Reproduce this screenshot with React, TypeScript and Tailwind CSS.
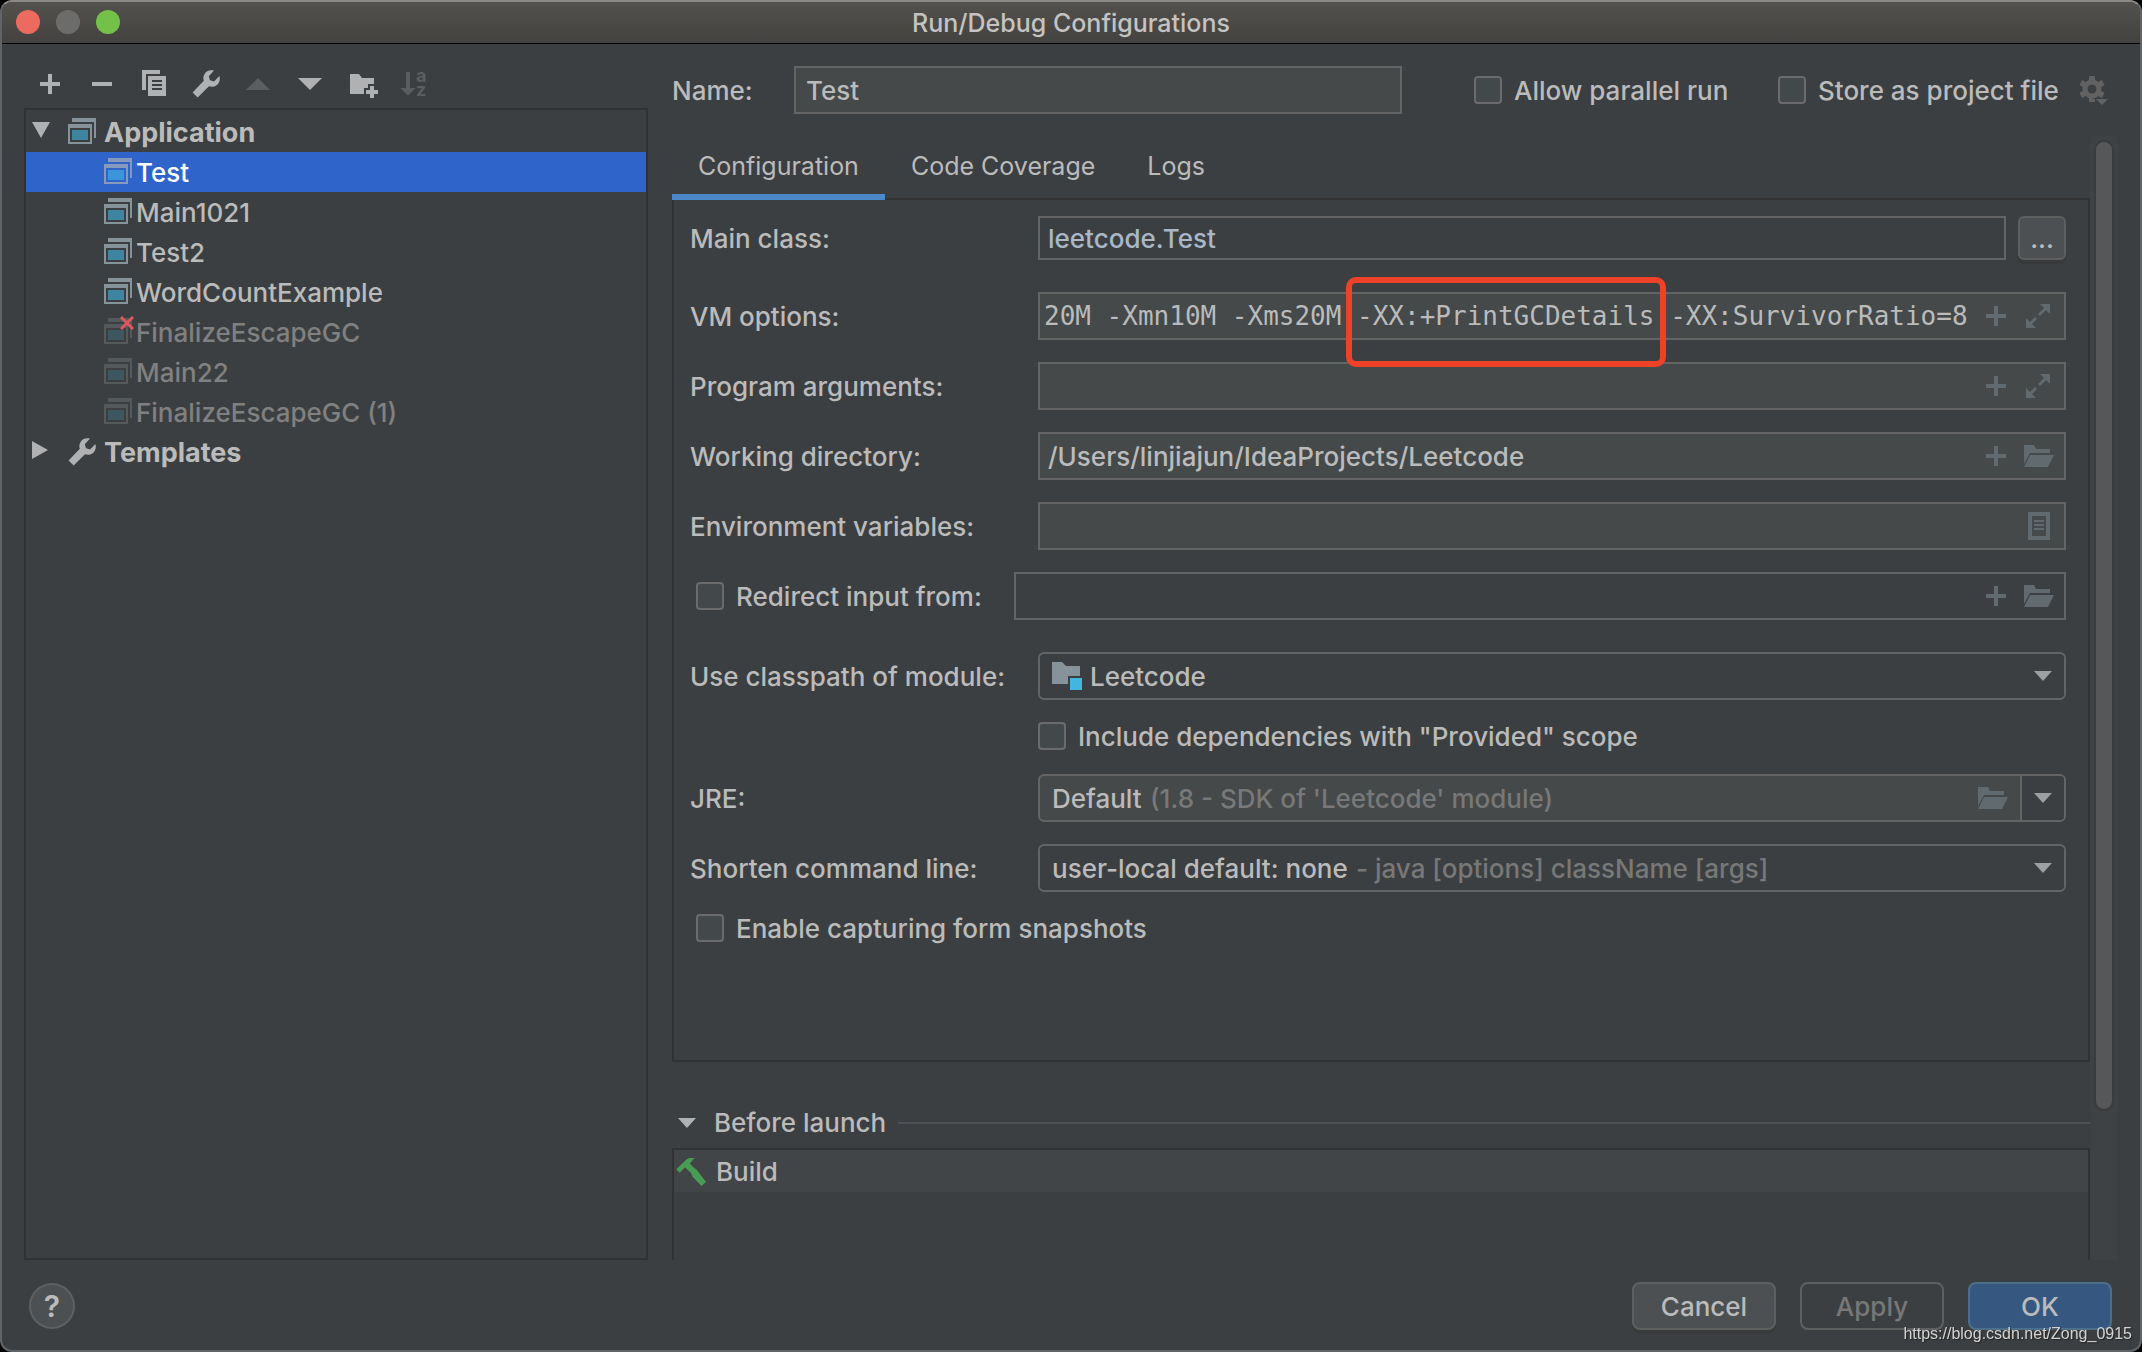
import React, { useId, useState } from "react";

type IconProps = { className?: string };

const PlusIcon = ({ className = "" }: IconProps) => (
  <svg width="32" height="32" viewBox="0 0 32 32" fill="currentColor" className={className} aria-hidden="true">
    <path d="M14 6h4v8h8v4h-8v8h-4v-8H6v-4h8z" />
  </svg>
);

const MinusIcon = () => (
  <svg width="32" height="32" viewBox="0 0 32 32" fill="currentColor" aria-hidden="true">
    <path d="M6 14h20v4H6z" />
  </svg>
);

const CopyIcon = () => (
  <svg width="32" height="32" viewBox="0 0 16 16" fill="currentColor" aria-hidden="true">
    <path d="M2 1h9v2H4v8H2z" />
    <path fillRule="evenodd" d="M5 4h9v10H5zM7 6v1h5V6zM7 8v1h5V8zM7 10v1h5v-1z" />
  </svg>
);

const WrenchIcon = () => (
  <svg width="32" height="32" viewBox="0 0 16 16" fill="currentColor" aria-hidden="true">
    <path d="M14.7 4 12 6.7l-2-.6-.6-2L12 1.3c-1.5-.5-3.1-.2-4.2.9C6.7 3.4 6.4 5 6.9 6.4L1.3 12.2l2.5 2.5 5.7-5.6c1.5.5 3.1.2 4.3-.9C14.9 7 15.2 5.4 14.7 4z" />
  </svg>
);

const UpIcon = () => (
  <svg width="32" height="32" viewBox="0 0 32 32" fill="currentColor" aria-hidden="true">
    <path d="M4 22 16 10l12 12z" />
  </svg>
);

const DownIcon = () => (
  <svg width="32" height="32" viewBox="0 0 32 32" fill="currentColor" aria-hidden="true">
    <path d="M4 10h24L16 22z" />
  </svg>
);

const NewFolderIcon = () => (
  <svg width="32" height="32" viewBox="0 0 16 16" fill="currentColor" aria-hidden="true">
    <path d="M2 3h4.5L8 5h6v3h-3v2H9v3H2z" />
    <path d="M12 9h2v2h2v2h-2v2h-2v-2h-2v-2h2z" />
  </svg>
);

const SortIcon = () => (
  <svg width="32" height="32" viewBox="0 0 16 16" fill="currentColor" className="overflow-visible" aria-hidden="true">
    <path d="M4 2h2v8h2.8L5 13.8 1.2 10H4z" />
    <text x="9" y="7" fontSize="9" fontWeight="700" fontFamily="Inter, sans-serif">a</text>
    <text x="9" y="13.8" fontSize="9" fontWeight="700" fontFamily="Inter, sans-serif">z</text>
  </svg>
);

const ComboArrow = () => (
  <svg width="18" height="10" viewBox="0 0 18 10" aria-hidden="true">
    <path d="M0 0h18L9 10z" fill="#9da0a3" />
  </svg>
);

const ExpandIcon = () => (
  <svg width="32" height="32" viewBox="0 0 32 32" fill="currentColor" aria-hidden="true">
    <path d="M28 4v10l-4-4-6 6-2-2 6-6-4-4z" />
    <path d="M4 28V18l4 4 5-5 2 2-5 5 4 4z" />
  </svg>
);

const OpenFolderIcon = () => (
  <svg width="32" height="32" viewBox="0 0 32 32" fill="currentColor" aria-hidden="true">
    <path d="M2 5h10l2 4h14v4H8L2 24z" />
    <path d="M8 15h24l-6 12H2z" />
  </svg>
);

const ListIcon = () => (
  <svg width="32" height="32" viewBox="0 0 32 32" fill="currentColor" aria-hidden="true">
    <path fillRule="evenodd" d="M6 2h22v28H6zM10 6v20h14V6z" />
    <path d="M12 10h10v2H12zM12 14h10v2H12zM12 18h10v2H12z" />
  </svg>
);

const ModuleIcon = () => (
  <svg width="30" height="28" viewBox="0 0 30 28" aria-hidden="true" className="shrink-0">
    <path d="M0 0h10l4 4h14v10H16v8H0z" fill="#87939a" />
    <path d="M18 16h12v12H18z" fill="#40b6e0" />
  </svg>
);

const GearIcon = () => (
  <svg width="28" height="32" viewBox="0 0 28 32" aria-hidden="true" fill="#626262">
    <mask id="gear-hole">
      <path d="M0 0h28v32H0z" fill="#fff" />
      <circle cx="12" cy="15" r="4.5" fill="#000" />
      <path d="M13 24h15v8h-6z" fill="#000" />
    </mask>
    <g mask="url(#gear-hole)">
      <circle cx="12" cy="15" r="9.5" />
      <rect x="9" y="2" width="6" height="26" rx="1" />
      <rect x="9" y="2" width="6" height="26" rx="1" transform="rotate(60 12 15)" />
      <rect x="9" y="2" width="6" height="26" rx="1" transform="rotate(120 12 15)" />
    </g>
    <path d="M16 25h12l-6 6z" />
  </svg>
);

const HammerIcon = () => (
  <svg width="30" height="30" viewBox="0 0 30 30" fill="#499c54" aria-hidden="true" className="shrink-0">
    <path d="M.3 12.3 10.7 2.3 13 1h5.5L13.8 6.6 17 10l3.5 2.5L30 25l-4.5 4L16.5 19.5 15 16 9 10.3 3.7 15.8z" />
  </svg>
);

const AppIcon = ({ tone, broken }: { tone: "normal" | "selected" | "dim"; broken?: boolean }) => {
  const frame = tone === "dim" ? "#54595c" : tone === "selected" ? "#8699ba" : "#87939a";
  const inner = tone === "dim" ? "#3d565f" : tone === "selected" ? "#3a95dc" : "#3e86a0";
  return (
    <svg width="32" height="32" viewBox="0 0 32 32" aria-hidden="true" className="shrink-0">
      <path d="M6 2h24v20h-2V6H6z" fill={frame} />
      <path fillRule="evenodd" d="M2 8h24v20H2zM4 12v14h20V12z" fill={frame} />
      <path d="M6 14h16v10H6z" fill={inner} />
      {broken && <path d="M19 1l12 12M31 1 19 13" stroke="#db5860" strokeWidth="3" />}
    </svg>
  );
};

const toolbar = [
  { label: "Add", icon: <PlusIcon /> },
  { label: "Remove", icon: <MinusIcon /> },
  { label: "Copy", icon: <CopyIcon /> },
  { label: "Edit templates", icon: <WrenchIcon /> },
  { label: "Move up", icon: <UpIcon />, disabled: true },
  { label: "Move down", icon: <DownIcon /> },
  { label: "Create folder", icon: <NewFolderIcon /> },
  { label: "Sort", icon: <SortIcon />, disabled: true },
];

const configs = [
  { name: "Test" },
  { name: "Main1021" },
  { name: "Test2" },
  { name: "WordCountExample" },
  { name: "FinalizeEscapeGC", dim: true, broken: true },
  { name: "Main22", dim: true },
  { name: "FinalizeEscapeGC (1)", dim: true },
];

function Check({ label, className = "" }: { label: string; className?: string }) {
  return (
    <label className={`flex items-center gap-3 whitespace-nowrap ${className}`}>
      <input
        type="checkbox"
        className="size-7 shrink-0 appearance-none rounded border-2 border-[#6b6b6b] bg-[#43494a] checked:bg-[#4a88c7]"
      />
      <span className="pt-0.5">{label}</span>
    </label>
  );
}

function IconButton({ label, children }: { label: string; children: React.ReactNode }) {
  return (
    <button type="button" aria-label={label} className="size-8 shrink-0 text-[#616a6e]">
      {children}
    </button>
  );
}

type FieldProps = {
  label: string;
  value?: string;
  mono?: boolean;
  icons?: React.ReactNode;
  children?: React.ReactNode;
};

function Field({ label, value = "", mono, icons, children }: FieldProps) {
  const id = useId();
  return (
    <div className="flex items-center">
      <label htmlFor={id} className="w-[348px] shrink-0 pt-0.5 whitespace-nowrap">{label}</label>
      <div className="relative flex h-12 min-w-0 flex-1 items-center gap-2.5 border-2 border-[#646464] bg-[#45494a] pr-2.5">
        <input
          id={id}
          defaultValue={value}
          className={
            mono
              ? "h-full min-w-0 flex-1 bg-transparent pl-1 font-['DejaVu_Sans_Mono',monospace] outline-none"
              : "h-full min-w-0 flex-1 bg-transparent pl-2 outline-none"
          }
        />
        {icons}
        {children}
      </div>
    </div>
  );
}

type ComboProps = { label: string; value: string; hint?: string; icon?: React.ReactNode; browse?: boolean };

function Combo({ label, value, hint, icon, browse }: ComboProps) {
  const id = useId();
  return (
    <div className="flex items-center">
      <label htmlFor={id} className="w-[348px] shrink-0 pt-0.5 whitespace-nowrap">{label}</label>
      <div
        className={`flex h-12 min-w-0 flex-1 items-center overflow-hidden rounded-md border-2 border-[#646464] pl-3 ${browse ? "bg-[#45494a]" : ""}`}
      >
        {icon}
        <select
          id={id}
          className={`h-full appearance-none bg-transparent pt-0.5 outline-none ${icon ? "flex-1 pl-2" : "shrink-0"}`}
        >
          <option>{value}</option>
        </select>
        {hint && <span className="min-w-0 flex-1 truncate pt-0.5 pl-2 text-[#787878]">{hint}</span>}
        {browse && (
          <span className="flex pr-3">
            <IconButton label="Browse JRE"><OpenFolderIcon /></IconButton>
          </span>
        )}
        <span
          className={`flex h-full shrink-0 items-center justify-center ${browse ? "w-11 border-l-2 border-[#646464] bg-[#3c3f41]" : "w-[42px]"}`}
        >
          <ComboArrow />
        </span>
      </div>
    </div>
  );
}

export default function App() {
  const [selected, setSelected] = useState("Test");
  const [tab, setTab] = useState("Configuration");

  return (
    <div className="h-screen bg-black font-[Inter,sans-serif] text-[26px] leading-8 font-medium text-[#bbbbbb]">
      <div className="flex h-full flex-col overflow-hidden rounded-xl border-2 border-[#616466] border-t-[#8b8a87] bg-[#3c3f41]">
        <header className="grid h-[42px] shrink-0 grid-cols-[1fr_auto_1fr] items-center border-b border-black bg-linear-to-b from-[#53514d] to-[#434240] px-3.5">
          <div className="flex gap-4 pb-0.5">
            <button type="button" aria-label="Close" className="size-6 rounded-full bg-[#ed6a5e]" />
            <button type="button" aria-label="Minimize" className="size-6 rounded-full bg-[#6c6c6a]" />
            <button type="button" aria-label="Zoom" className="size-6 rounded-full bg-[#73c148]" />
          </div>
          <h1 className="text-[25px] text-[#c4c3c1]">Run/Debug Configurations</h1>
        </header>

        <div className="flex min-h-0 flex-1 gap-6 px-[22px]">
          <aside className="flex w-[624px] shrink-0 flex-col pt-6">
            <div role="toolbar" className="flex gap-5 px-2.5 text-[#afb1b3]">
              {toolbar.map((t) => (
                <button
                  key={t.label}
                  type="button"
                  aria-label={t.label}
                  disabled={t.disabled}
                  className="size-8 disabled:text-[#5c5d5e]"
                >
                  {t.icon}
                </button>
              ))}
            </div>
            <ul role="tree" className="mt-2 flex-1 border-2 border-[#323232] py-0.5">
              <li role="treeitem" aria-expanded="true" className="flex h-10 items-center pl-1.5">
                <svg width="18" height="16" viewBox="0 0 18 16" className="mr-4 mb-1" fill="#afb1b3" aria-hidden="true">
                  <path d="M0 0h18L9 16z" />
                </svg>
                <AppIcon tone="normal" />
                <span className="pt-0.5 pl-1.5 text-[27px] font-bold">Application</span>
              </li>
              {configs.map((c) => {
                const on = c.name === selected;
                return (
                  <li
                    key={c.name}
                    role="treeitem"
                    aria-selected={on}
                    onClick={() => setSelected(c.name)}
                    className={`flex h-10 items-center pl-[76px] ${on ? "bg-[#2f65ca] text-white" : c.dim ? "text-[#808080]" : ""}`}
                  >
                    <AppIcon tone={on ? "selected" : c.dim ? "dim" : "normal"} broken={c.broken} />
                    <span className="pt-0.5 pl-0.5">{c.name}</span>
                  </li>
                );
              })}
              <li role="treeitem" aria-expanded="false" className="flex h-10 items-center pl-1.5">
                <svg width="16" height="18" viewBox="0 0 16 18" className="mr-[18px] mb-1" fill="#afb1b3" aria-hidden="true">
                  <path d="M0 0v18l16-9z" />
                </svg>
                <span className="text-[#afb1b3]"><WrenchIcon /></span>
                <span className="pt-0.5 pl-1.5 text-[27px] font-bold">Templates</span>
              </li>
            </ul>
          </aside>

          <main className="flex min-w-0 flex-1 flex-col pt-[22px]">
            <div className="flex items-center pr-2.5">
              <label htmlFor="config-name" className="w-[122px] shrink-0 pt-0.5">Name:</label>
              <input
                id="config-name"
                defaultValue="Test"
                className="mr-[72px] h-12 min-w-0 flex-1 border-2 border-[#646464] bg-[#45494a] px-2.5 outline-none"
              />
              <Check label="Allow parallel run" className="w-[304px]" />
              <Check label="Store as project file" className="w-[302px]" />
              <button type="button" aria-label="Storage options"><GearIcon /></button>
            </div>

            <div className="mt-[22px] flex min-h-0 flex-1">
              <div className="flex min-w-0 flex-1 flex-col overflow-hidden">
                <div role="tablist" className="relative z-10 flex shrink-0 text-[25px]">
                  {["Configuration", "Code Coverage", "Logs"].map((t) => (
                    <button
                      key={t}
                      type="button"
                      role="tab"
                      aria-selected={t === tab}
                      onClick={() => setTab(t)}
                      className={`h-16 border-b-6 px-[26px] pt-0.5 font-normal ${t === tab ? "border-[#4a88c7]" : "border-transparent"}`}
                    >
                      {t}
                    </button>
                  ))}
                </div>

                <form className="-mt-0.5 flex shrink-0 flex-col gap-[22px] border-2 border-[#323232] pt-4 pr-[22px] pb-[118px] pl-4">
                  <div className="mb-2.5 flex items-center">
                    <label htmlFor="main-class" className="w-[348px] shrink-0 pt-0.5">Main class:</label>
                    <input
                      id="main-class"
                      defaultValue="leetcode.Test"
                      className="h-11 min-w-0 flex-1 border-2 border-[#646464] bg-transparent px-2 text-[#a9b7c6] outline-none"
                    />
                    <button
                      type="button"
                      className="ml-3 h-11 w-12 rounded-md border-2 border-[#5e6060] bg-[#4c5052] pt-0.5 shadow-[0_4px_0_#383a3b]"
                    >
                      ...
                    </button>
                  </div>
                  <Field
                    label="VM options:"
                    mono
                    value="20M -Xmn10M -Xms20M -XX:+PrintGCDetails -XX:SurvivorRatio=8"
                    icons={
                      <>
                        <IconButton label="Insert macro"><PlusIcon /></IconButton>
                        <IconButton label="Expand"><ExpandIcon /></IconButton>
                      </>
                    }
                  >
                    <span className="pointer-events-none absolute -top-[17px] left-[306px] z-10 h-[90px] w-80 rounded-[10px] border-6 border-[#ed4228]" />
                  </Field>
                  <Field
                    label="Program arguments:"
                    icons={
                      <>
                        <IconButton label="Insert macro"><PlusIcon /></IconButton>
                        <IconButton label="Expand"><ExpandIcon /></IconButton>
                      </>
                    }
                  />
                  <Field
                    label="Working directory:"
                    value="/Users/linjiajun/IdeaProjects/Leetcode"
                    icons={
                      <>
                        <IconButton label="Insert macro"><PlusIcon /></IconButton>
                        <IconButton label="Browse"><OpenFolderIcon /></IconButton>
                      </>
                    }
                  />
                  <Field
                    label="Environment variables:"
                    icons={<IconButton label="Edit variables"><ListIcon /></IconButton>}
                  />
                  <div className="mb-2.5 flex items-center">
                    <Check label="Redirect input from:" className="w-[324px] shrink-0 pl-1.5" />
                    <div className="flex h-12 min-w-0 flex-1 items-center gap-2.5 border-2 border-[#646464] pr-2.5">
                      <input aria-label="Redirect input file" className="h-full min-w-0 flex-1 bg-transparent pl-2 outline-none" />
                      <IconButton label="Insert macro"><PlusIcon /></IconButton>
                      <IconButton label="Browse"><OpenFolderIcon /></IconButton>
                    </div>
                  </div>
                  <Combo label="Use classpath of module:" value="Leetcode" icon={<ModuleIcon />} />
                  <Check label={'Include dependencies with "Provided" scope'} className="mb-0.5 h-7 pl-[348px]" />
                  <Combo label="JRE:" value="Default" hint="(1.8 - SDK of 'Leetcode' module)" browse />
                  <Combo
                    label="Shorten command line:"
                    value="user-local default: none"
                    hint="- java [options] className [args]"
                  />
                  <Check label="Enable capturing form snapshots" className="h-7 pl-1.5" />
                </form>

                <h2 className="mt-9 flex h-[50px] shrink-0 items-center font-medium">
                  <svg width="18" height="10" viewBox="0 0 18 10" className="mr-[18px] ml-1.5" aria-hidden="true">
                    <path d="M0 0h18L9 10z" fill="#afb1b3" />
                  </svg>
                  Before launch
                  <span className="ml-3 h-0.5 flex-1 bg-[#515151]" />
                </h2>
                <ul className="min-h-0 flex-1 border-2 border-b-0 border-[#323232]">
                  <li className="flex h-[42px] items-center gap-2.5 bg-[#414547] pt-0.5 pl-0.5">
                    <HammerIcon />
                    Build
                  </li>
                </ul>
              </div>
              <div className="w-7 shrink-0 bg-[#3f4244] p-1">
                <div className="h-[87%] rounded-full border-2 border-[#393b3c] bg-[#565758]" />
              </div>
            </div>
          </main>
        </div>

        <footer className="flex h-[90px] shrink-0 items-center gap-6 pt-0.5 pr-7 pl-[27px]">
          <button
            type="button"
            aria-label="Help"
            className="mr-auto size-[46px] rounded-full border-2 border-[#5e6060] bg-[#4c5052] text-[30px] font-semibold"
          >
            ?
          </button>
          <button
            type="button"
            className="h-12 w-36 rounded-lg border-2 border-[#5e6060] bg-[#4c5052] pt-0.5 shadow-[0_4px_0_#383a3b]"
          >
            Cancel
          </button>
          <button type="button" disabled className="h-12 w-36 rounded-lg border-2 border-[#5e6060] pt-0.5 text-[#777777]">
            Apply
          </button>
          <button type="button" className="h-12 w-36 rounded-lg border-2 border-[#4c708c] bg-[#365880] pt-0.5">
            OK
          </button>
        </footer>
      </div>
      <span className="pointer-events-none fixed right-2.5 bottom-2 font-['Liberation_Sans',sans-serif] text-base leading-5 font-normal text-[#d4d4d4] [text-shadow:1px_1px_1px_#222]">
        https://blog.csdn.net/Zong_0915
      </span>
    </div>
  );
}
